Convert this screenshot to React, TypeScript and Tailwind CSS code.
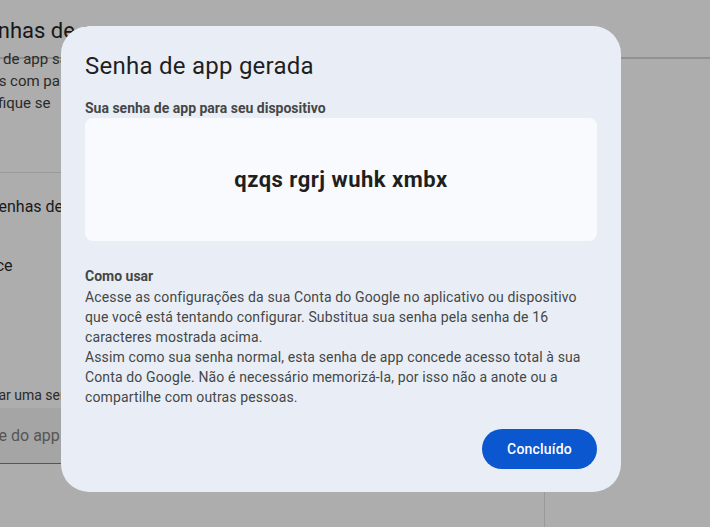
import React from "react"

const bodyFont = { fontFamily: "Roboto, 'Liberation Sans', sans-serif" }

function BackgroundPage() {
  return (
    <div className="h-[527px] w-[710px] overflow-hidden bg-[#adadad] text-[#1c1c1c]" style={bodyFont}>
      <div className="h-[59px] border-b-2 border-[#919191]">
        <div className="pt-[17px] -ml-[27px] text-[22px] leading-[28px] text-[#171717] whitespace-nowrap">
          Senhas de app
        </div>
      </div>
      <div className="-mt-[11px] text-[15px] leading-[22px] text-[#2a2a2a] whitespace-nowrap">
        <div className="-ml-[50px]">Senhas de app são</div>
        <div className="-ml-[28px]">Apps com pa</div>
        <div className="-ml-[28px]">Verifique se</div>
      </div>
      <div className="mt-[58px] w-[61px] border-t border-[#9a9a9a]" />
      <div className="mt-[23px] -ml-[11px] text-[16px] leading-[22px] text-[#1a1a1a] whitespace-nowrap">
        Senhas de app
      </div>
      <div className="mt-[37px] -ml-[51px] text-[16px] leading-[22px] text-[#1a1a1a] whitespace-nowrap">
        Interface
      </div>
      <div className="mt-[108px] -ml-[49px] text-[14px] leading-[20px] text-[#2a2a2a] whitespace-nowrap">
        Para criar uma senha
      </div>
      <div className="mt-[3px] h-[56px] w-[200px] border-b border-[#555] bg-[#a5a5a5] flex items-center">
        <span className="-ml-[36px] text-[16px] text-[#555] whitespace-nowrap">Nome do app</span>
      </div>
      <div className="mt-[27px] ml-[544px] h-[40px] w-px bg-[#999]" />
    </div>
  )
}

function GeneratedPasswordDialog() {
  return (
    <div
      className="absolute left-[61px] top-[26px] flex w-[560px] flex-col rounded-[28px] bg-[#e9eef6] px-[24px] pt-[24px] pb-[23px]"
      style={bodyFont}
    >
      <h2 className="text-[24px] leading-[32px] font-normal tracking-[0.25px] text-[#1f1f1f]">Senha de app gerada</h2>
      <div className="mt-[16px] text-[14px] leading-[20px] font-bold text-[#444746]">
        Sua senha de app para seu dispositivo
      </div>
      <div className="flex h-[123px] items-center justify-center rounded-[8px] bg-[#f8fafd]">
        <span className="text-[22px] font-bold tracking-[0.5px] text-[#1f1f1f]">qzqs rgrj wuhk xmbx</span>
      </div>
      <div className="mt-[25px] text-[14px] leading-[20px] font-bold text-[#444746]">Como usar</div>
      <div className="mt-[1px] text-[14px] leading-[20px] tracking-[0.13px] text-[#444746] whitespace-nowrap">
        <p>
          Acesse as configurações da sua Conta do Google no aplicativo ou dispositivo
          <br />
          que você está tentando configurar. Substitua sua senha pela senha de 16
          <br />
          caracteres mostrada acima.
        </p>
        <p>
          Assim como sua senha normal, esta senha de app concede acesso total à sua
          <br />
          Conta do Google. Não é necessário memorizá-la, por isso não a anote ou a
          <br />
          compartilhe com outras pessoas.
        </p>
      </div>
      <div className="mt-[22px] flex justify-end">
        <button className="h-[40px] w-[115px] rounded-full bg-[#0b57d0] text-[14px] font-medium tracking-[0.2px] text-white">
          Concluído
        </button>
      </div>
    </div>
  )
}

export default function App() {
  return (
    <div className="relative h-[527px] w-[710px] overflow-hidden">
      <BackgroundPage />
      <GeneratedPasswordDialog />
    </div>
  )
}
